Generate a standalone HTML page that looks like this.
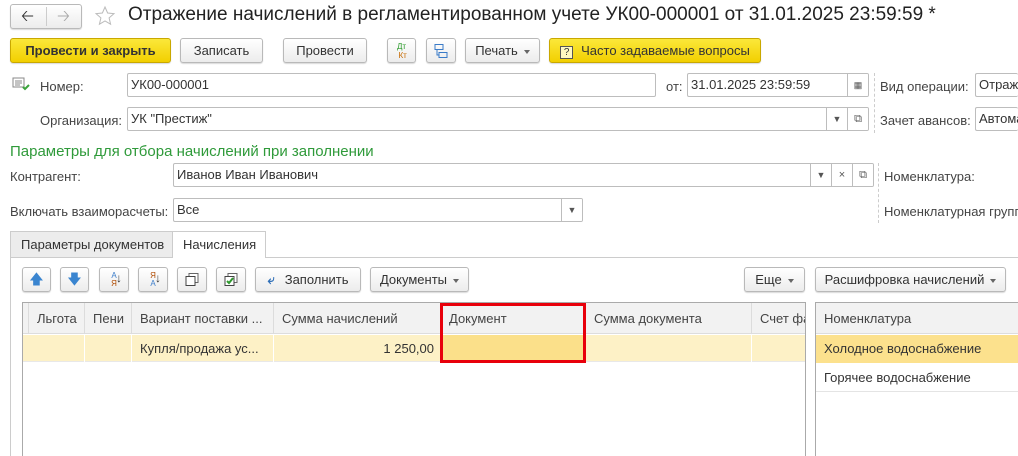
<!DOCTYPE html>
<html style="height:456px;overflow:hidden"><head><meta charset="utf-8"><style>
*{box-sizing:border-box;margin:0;padding:0}
body{width:1018px;height:456px;overflow:hidden;background:#fff;font-family:"Liberation Sans",Arial,sans-serif;font-size:13px;color:#444;position:relative}
.a{position:absolute}
.btn{position:absolute;height:25px;border:1px solid #b9b9b9;border-radius:3px;background:linear-gradient(#fff,#ececec);box-shadow:0 1px 1px rgba(0,0,0,.15);color:#333;text-align:center;line-height:23px;white-space:nowrap}
.yel{background:linear-gradient(#fbe83a,#f2cf00);border-color:#c9a800;color:#333}
.inp{position:absolute;height:24px;border:1px solid #bdbdbd;border-radius:2px;background:#fff;color:#333;line-height:22px;padding-left:3px;white-space:nowrap;overflow:hidden}
.ib{position:absolute;top:0;height:22px;width:21px;border-left:1px solid #bdbdbd;text-align:center;line-height:22px;font-size:9px;color:#555;background:#fff}
.lbl{position:absolute;color:#444;white-space:nowrap}
.tri{display:inline-block;width:0;height:0;border-left:3px solid transparent;border-right:3px solid transparent;border-top:4px solid #666;vertical-align:middle;margin-left:6px}
.dash{position:absolute;border-left:1px dashed #ccc}
.th{position:absolute;top:0;height:31px;line-height:31px;border-right:1px solid #dcdcdc;padding-left:8px;color:#444;white-space:nowrap;overflow:hidden}
.td{position:absolute;top:0;height:27px;line-height:27px;border-right:1px solid #fff;padding-left:8px;color:#333;white-space:nowrap;overflow:hidden}
</style></head><body>
<div class="btn" style="left:10px;top:4px;width:72px;height:25px"></div>
<div class="a" style="left:46px;top:7px;height:19px;border-left:1px solid #ccc"></div>
<div class="a" style="left:21px;top:5px;font-size:16px;color:#333">&#129120;</div>
<div class="a" style="left:57px;top:5px;font-size:16px;color:#aaa">&#129122;</div>
<svg class="a" style="left:94px;top:5px" width="22" height="22" viewBox="0 0 22 22"><path d="M11 2l2.6 6 6.4.6-4.9 4.3 1.5 6.3L11 15.9 5.4 19.2l1.5-6.3L2 8.6l6.4-.6z" fill="none" stroke="#bbb" stroke-width="1"/></svg>
<div class="a" style="left:128px;top:4px;font-size:19px;color:#222;white-space:nowrap">Отражение начислений в регламентированном учете УК00-000001 от 31.01.2025 23:59:59 *</div>
<div class="btn yel" style="left:10px;top:38px;width:161px;font-weight:bold">Провести и закрыть</div>
<div class="btn" style="left:180px;top:38px;width:83px">Записать</div>
<div class="btn" style="left:283px;top:38px;width:84px">Провести</div>
<div class="btn" style="left:387px;top:38px;width:29px;font-size:8px;line-height:9px;padding-top:3px"><span style="color:#2a9a2a">Дт</span><br><span style="color:#c66a00">&nbsp;Кт</span></div>
<div class="btn" style="left:426px;top:38px;width:30px"><svg width="16" height="16" viewBox="0 0 16 16" style="margin-top:4px"><rect x="2" y="1.5" width="8" height="5" fill="none" stroke="#3a7bc8"/><rect x="6" y="9.5" width="8" height="5" fill="none" stroke="#3a7bc8"/><path d="M4 7v5h2" stroke="#3a7bc8" fill="none"/></svg></div>
<div class="btn" style="left:465px;top:38px;width:75px">Печать<span class="tri"></span></div>
<div class="btn yel" style="left:549px;top:38px;width:212px;font-weight:normal"><span style="display:inline-block;width:13px;height:13px;border:1px solid #555;line-height:11px;font-size:10px;margin-right:8px;background:#fff8c0">?</span>Часто задаваемые вопросы</div>
<svg class="a" style="left:12px;top:77px" width="18" height="14" viewBox="0 0 18 14"><rect x="1" y="1" width="11" height="9" fill="#fff" stroke="#888"/><path d="M3 4h7M3 6h7M3 8h5" stroke="#888"/><path d="M11 10l2 2 4-4" stroke="#3aa33a" stroke-width="2" fill="none"/></svg>
<div class="lbl" style="left:40px;top:79px">Номер:</div>
<div class="inp" style="left:127px;top:73px;width:529px">УК00-000001</div>
<div class="lbl" style="left:666px;top:79px">от:</div>
<div class="inp" style="left:687px;top:73px;width:182px">31.01.2025 23:59:59<div class="ib" style="right:0">&#9638;</div></div>
<div class="dash" style="left:874px;top:73px;height:60px"></div>
<div class="lbl" style="left:880px;top:79px">Вид операции:</div>
<div class="inp" style="left:975px;top:73px;width:43px;border-right:none">Отраж</div>
<div class="lbl" style="left:40px;top:113px">Организация:</div>
<div class="inp" style="left:127px;top:107px;width:742px">УК "Престиж"<div class="ib" style="right:21px">&#9660;</div><div class="ib" style="right:0;font-size:11px">&#10697;</div></div>
<div class="lbl" style="left:880px;top:113px">Зачет авансов:</div>
<div class="inp" style="left:975px;top:107px;width:43px;border-right:none">Автома</div>
<div class="a" style="left:10px;top:143px;font-size:15px;color:#2f9a3a;white-space:nowrap">Параметры для отбора начислений при заполнении</div>
<div class="lbl" style="left:10px;top:169px">Контрагент:</div>
<div class="inp" style="left:173px;top:163px;width:701px">Иванов Иван Иванович<div class="ib" style="right:42px">&#9660;</div><div class="ib" style="right:21px;font-size:11px">×</div><div class="ib" style="right:0;font-size:11px">&#10697;</div></div>
<div class="dash" style="left:878px;top:163px;height:60px"></div>
<div class="lbl" style="left:884px;top:169px">Номенклатура:</div>
<div class="lbl" style="left:10px;top:204px">Включать взаиморасчеты:</div>
<div class="inp" style="left:173px;top:198px;width:410px">Все<div class="ib" style="right:0">&#9660;</div></div>
<div class="lbl" style="left:884px;top:204px">Номенклатурная групп</div>
<div class="a" style="left:10px;top:231px;width:163px;height:27px;background:#ececec;border:1px solid #ccc;border-bottom:none;line-height:25px;padding-left:10px;color:#333">Параметры документов</div>
<div class="a" style="left:172px;top:231px;width:94px;height:27px;background:#fff;border:1px solid #ccc;border-bottom:none;line-height:25px;padding-left:10px;color:#333;z-index:2">Начисления</div>
<div class="a" style="left:10px;top:257px;width:1008px;height:199px;border-top:1px solid #ccc;border-left:1px solid #ccc"></div>
<div class="btn" style="left:22px;top:267px;width:29px;color:#3a85d0;font-size:14px">&#129093;</div>
<div class="btn" style="left:60px;top:267px;width:29px;color:#3a85d0;font-size:14px">&#129095;</div>
<div class="btn" style="left:99px;top:267px;width:30px;font-size:8px;line-height:8px;padding-top:4px"><span style="color:#3a7bc8">А</span><br><span style="color:#b04a00">Я</span><span style="position:absolute;left:16px;top:6px;font-size:12px">&#8595;</span></div>
<div class="btn" style="left:138px;top:267px;width:30px;font-size:8px;line-height:8px;padding-top:4px"><span style="color:#b04a00">Я</span><br><span style="color:#3a7bc8">А</span><span style="position:absolute;left:16px;top:6px;font-size:12px">&#8595;</span></div>
<div class="btn" style="left:177px;top:267px;width:30px"><svg width="16" height="16" viewBox="0 0 16 16" style="margin-top:4px"><rect x="5" y="1.5" width="9" height="9" fill="#fff" stroke="#666"/><rect x="2" y="4.5" width="9" height="9" fill="#fff" stroke="#444"/></svg></div>
<div class="btn" style="left:216px;top:267px;width:30px"><svg width="16" height="16" viewBox="0 0 16 16" style="margin-top:4px"><rect x="5" y="1.5" width="9" height="9" fill="#fff" stroke="#666"/><rect x="2" y="4.5" width="9" height="9" fill="#fff" stroke="#444"/><path d="M4 9l2 2 4-5" stroke="#2e9a2e" stroke-width="2" fill="none"/></svg></div>
<div class="btn" style="left:255px;top:267px;width:106px"><span style="color:#2f6fb8;font-weight:bold;margin-right:10px">&#10550;</span>Заполнить</div>
<div class="btn" style="left:370px;top:267px;width:99px">Документы<span class="tri"></span></div>
<div class="btn" style="left:744px;top:267px;width:61px">Еще<span class="tri"></span></div>
<div class="btn" style="left:815px;top:267px;width:191px">Расшифровка начислений<span class="tri"></span></div>
<div class="a" style="left:22px;top:302px;width:784px;height:154px;border:1px solid #aaa;border-bottom:none;overflow:hidden">
 <div class="a" style="left:0;top:0;width:784px;height:31px;background:#f2f2f2;border-bottom:1px solid #ddd">
  <div class="th" style="left:0;width:6px;padding:0"></div>
  <div class="th" style="left:6px;width:56px">Льгота</div>
  <div class="th" style="left:62px;width:47px">Пени</div>
  <div class="th" style="left:109px;width:142px">Вариант поставки ...</div>
  <div class="th" style="left:251px;width:167px">Сумма начислений</div>
  <div class="th" style="left:418px;width:145px">Документ</div>
  <div class="th" style="left:563px;width:166px">Сумма документа</div>
  <div class="th" style="left:729px;width:60px">Счет фа</div>
 </div>
 <div class="a" style="left:0;top:32px;width:784px;height:27px;background:#fdf1c6;border-bottom:1px solid #e8e8e8">
  <div class="td" style="left:0;width:62px"></div>
  <div class="td" style="left:62px;width:47px"></div>
  <div class="td" style="left:109px;width:142px">Купля/продажа ус...</div>
  <div class="td" style="left:251px;width:167px;text-align:right;padding-right:6px">1 250,00</div>
  <div class="td" style="left:418px;width:145px;background:#fbe08a"></div>
  <div class="td" style="left:563px;width:166px"></div>
 </div>
</div>
<div class="a" style="left:440px;top:303px;width:146px;height:60px;border:3px solid #e8000b"></div>
<div class="a" style="left:815px;top:302px;width:203px;height:154px;border:1px solid #aaa;border-bottom:none;border-right:none;overflow:hidden">
 <div class="a" style="left:0;top:0;width:210px;height:31px;background:#f2f2f2;border-bottom:1px solid #ddd;line-height:31px;padding-left:8px;color:#444">Номенклатура</div>
 <div class="a" style="left:0;top:32px;width:210px;height:28px;background:#fce18d;line-height:28px;padding-left:8px;color:#333">Холодное водоснабжение</div>
 <div class="a" style="left:0;top:60px;width:210px;height:29px;border-bottom:1px solid #e4e4e4;line-height:29px;padding-left:8px;color:#333">Горячее водоснабжение</div>
</div>
</body></html>
